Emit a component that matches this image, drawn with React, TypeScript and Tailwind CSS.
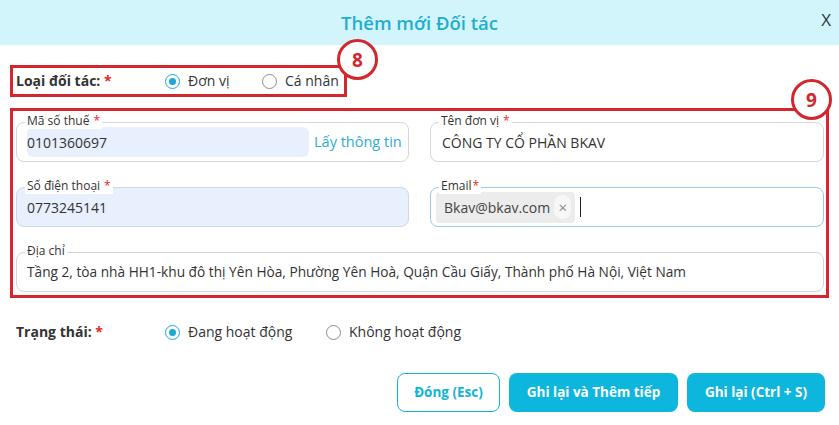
import React from "react";

const RED = "border-[#d3262d]";

function Radio({ checked, label, textW }: { checked: boolean; label: string; textW?: string }) {
  return (
    <div className="flex items-center">
      <span
        className={
          "flex h-[15px] w-[15px] items-center justify-center rounded-full border " +
          (checked ? "border-[#1ba7d9]" : "border-[#8c8c8c]")
        }
      >
        {checked && <span className="h-[7px] w-[7px] rounded-full bg-[#1ba7d9]" />}
      </span>
      <span className={"ml-[8px] text-[14px] leading-[20px] text-[#333] " + (textW ?? "")}>{label}</span>
    </div>
  );
}

function Field({
  label,
  required,
  tight,
  children,
  className,
}: {
  label: string;
  required?: boolean;
  tight?: boolean;
  children: React.ReactNode;
  className?: string;
}) {
  return (
    <div
      className={
        "relative flex h-[40px] items-center rounded-[8px] border " + (className ?? "border-[#d6d6d6] bg-white")
      }
    >
      <span className="absolute left-[8px] top-[-10px] bg-white px-[2px] text-[12px] leading-[16px] text-[#333]">
        {label}
        {required && <span className={(tight ? "ml-[1px]" : "ml-[4px]") + " text-[#e0282e]"}>*</span>}
      </span>
      {children}
    </div>
  );
}

export default function App() {
  return (
    <div className="h-[425px] w-[839px] overflow-hidden bg-white font-['Open_Sans',sans-serif]">
      <div className="relative flex h-[45px] items-center justify-center bg-[#d2f4fb]">
        <span className="text-[18.5px] font-semibold text-[#23aecf]">Thêm mới Đối tác</span>
        <span className="absolute right-[8px] top-[10px] text-[17px] leading-[20px] text-[#2b3a45]">X</span>
      </div>

      <div className="px-[10px]">
        <div className={"relative mt-[20px] flex h-[32px] w-[337px] items-center border-[3px] pl-[3px] " + RED}>
          <span className="w-[149px] text-[14px] font-bold leading-[20px] text-[#333]">
            Loại đối tác: <span className="text-[#e0282e]">*</span>
          </span>
          <Radio checked label="Đơn vị" textW="w-[74px]" />
          <Radio checked={false} label="Cá nhân" />
          <div
            className={
              "absolute left-[324px] top-[-29px] flex h-[41px] w-[41px] items-center justify-center rounded-full border-[3px] bg-white " +
              RED
            }
          >
            <span className="text-[19px] font-bold leading-[20px] text-[#d3262d]">8</span>
          </div>
        </div>

        <div className={"relative mt-[11px] border-[3px] pb-[3px] pl-[3px] pr-[2px] pt-[11px] " + RED}>
          <div
            className={
              "absolute right-[-6px] top-[-32px] flex h-[41px] w-[41px] items-center justify-center rounded-full border-[3px] bg-white " +
              RED
            }
          >
            <span className="text-[19px] font-bold leading-[20px] text-[#d3262d]">9</span>
          </div>
          <div className="grid grid-cols-[393px_394px] gap-x-[21px] gap-y-[25px]">
            <Field label="Mã số thuế" required>
              <div className="ml-[10px] flex h-[30px] w-[282px] items-center rounded-[6px] bg-[#e8f0fe] text-[14px] text-[#333]">
                0101360697
              </div>
              <span className="ml-[5px] text-[14.5px] text-[#2aaed1]">Lấy thông tin</span>
            </Field>
            <Field label="Tên đơn vị" required>
              <span className="ml-[11px] text-[14px] text-[#333]">CÔNG TY CỔ PHẦN BKAV</span>
            </Field>
            <Field label="Số điện thoại" required className="border-[#d0d8e6] bg-[#e8f0fe]">
              <span className="ml-[10px] text-[14px] text-[#333]">0773245141</span>
            </Field>
            <Field label="Email" required tight className="border-[#9ccbe6] bg-white">
              <div className="ml-[5px] flex h-[31px] items-center rounded-[4px] bg-[#ececec] pl-[8px] pr-[4px]">
                <span className="text-[14px] text-[#444]">Bkav@bkav.com</span>
                <span className="ml-[4px] flex h-[24px] w-[17px] items-center justify-center rounded-full bg-[#f7f7f7] text-[15px] leading-[15px] text-[#888]">
                  ×
                </span>
              </div>
              <span className="ml-[5px] h-[20px] w-px bg-[#222]" />
            </Field>
            <div className="col-span-2">
              <Field label="Địa chỉ">
                <span className="ml-[10px] text-[13.7px] text-[#333]">
                  Tầng 2, tòa nhà HH1-khu đô thị Yên Hòa, Phường Yên Hoà, Quận Cầu Giấy, Thành phố Hà Nội, Việt Nam
                </span>
              </Field>
            </div>
          </div>
        </div>

        <div className="mt-[24px] flex h-[20px] items-center pl-[6px]">
          <span className="w-[149px] text-[14px] font-bold leading-[20px] text-[#333]">
            Trạng thái: <span className="text-[#e0282e]">*</span>
          </span>
          <Radio checked label="Đang hoạt động" textW="w-[138px]" />
          <Radio checked={false} label="Không hoạt động" />
        </div>

        <div className="mt-[31px] flex justify-end gap-[9px] pr-[4px]">
          <button className="h-[39px] w-[103px] rounded-[8px] border border-[#12b4da] bg-white text-[13.5px] font-bold text-[#12b4da]">
            Đóng (Esc)
          </button>
          <button className="h-[39px] w-[169px] rounded-[8px] bg-[#0db6dc] text-[13.5px] font-bold text-white">
            Ghi lại và Thêm tiếp
          </button>
          <button className="h-[39px] w-[138px] rounded-[8px] bg-[#0db6dc] text-[13.5px] font-bold text-white">
            Ghi lại (Ctrl + S)
          </button>
        </div>
      </div>
    </div>
  );
}
